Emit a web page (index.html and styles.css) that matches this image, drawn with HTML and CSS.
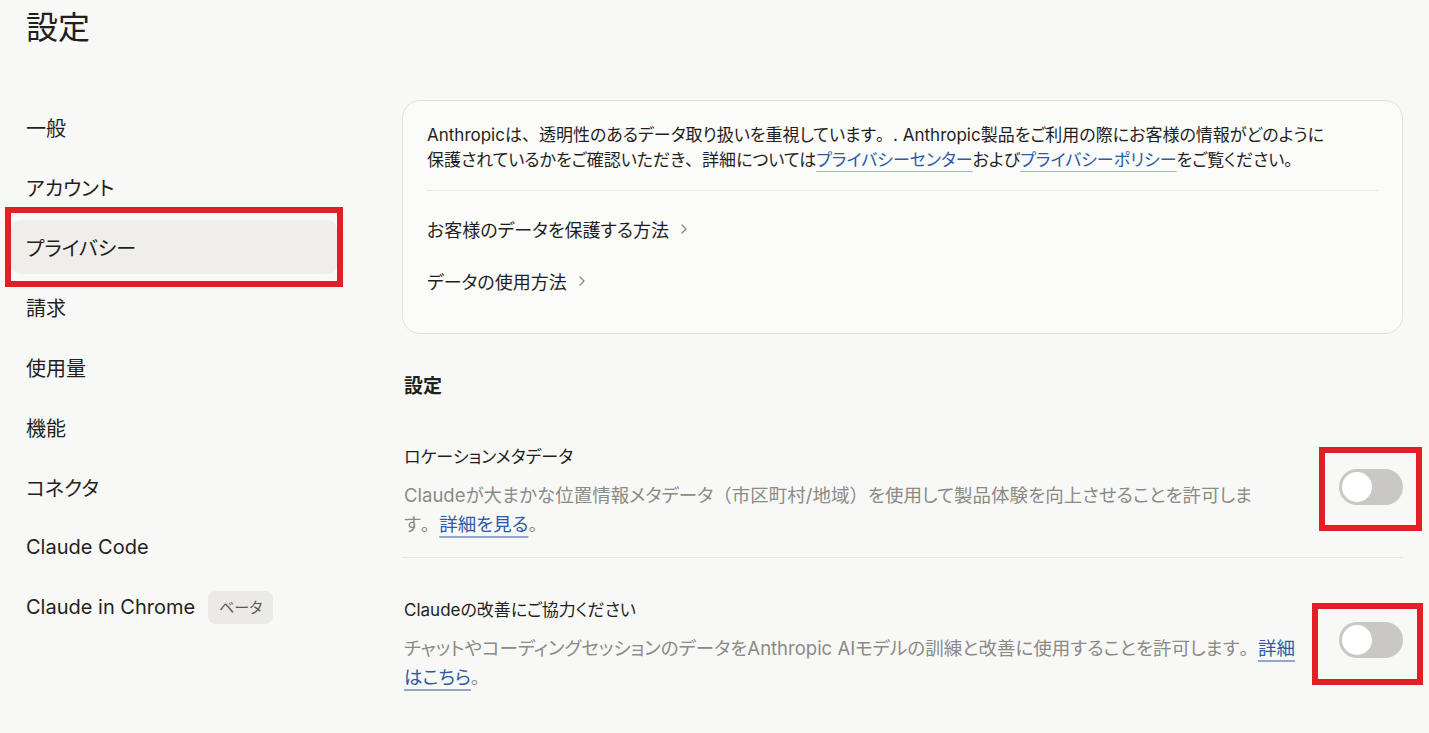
FILE: index.html
```html
<!DOCTYPE html>
<html lang="ja">

<head>
  <meta charset="UTF-8">
  <meta name="viewport" content="width=device-width, initial-scale=1.0">
  <title>設定</title>
  <link rel="stylesheet" href="styles.css">
</head>

<body>
  <h1 class="page-title">設定</h1>

  <div class="layout">
    <nav class="sidebar">
      <a class="nav-item" href="#">一般</a>
      <a class="nav-item" href="#">アカウント</a>
      <a class="nav-item active" href="#">プライバシー</a>
      <a class="nav-item" href="#">請求</a>
      <a class="nav-item" href="#">使用量</a>
      <a class="nav-item" href="#">機能</a>
      <a class="nav-item" href="#">コネクタ</a>
      <a class="nav-item" href="#">Claude Code</a>
      <a class="nav-item" href="#">Claude in Chrome <span class="badge">ベータ</span></a>
    </nav>

    <main class="main">
      <section class="card">
        <p class="intro">Anthropicは<span class="fw">、</span>透明性のあるデータ取り扱いを重視しています<span class="fw">。</span>. Anthropic製品をご利用の際にお客様の情報がどのように<br>保護されているかをご確認いただき<span class="fw">、</span>詳細については<a class="link" href="#">プライバシーセンター</a>および<a class="link" href="#">プライバシーポリシー</a>をご覧ください<span class="fw">。</span></p>
        <div class="card-links">
          <a class="more" href="#">お客様のデータを保護する方法
            <svg width="14" height="14" viewBox="0 0 14 14"><path d="M5 3l4 4-4 4" fill="none" stroke="#8a8985" stroke-width="1.3" stroke-linecap="round" stroke-linejoin="round"/></svg>
          </a>
          <a class="more" href="#">データの使用方法
            <svg width="14" height="14" viewBox="0 0 14 14"><path d="M5 3l4 4-4 4" fill="none" stroke="#8a8985" stroke-width="1.3" stroke-linecap="round" stroke-linejoin="round"/></svg>
          </a>
        </div>
      </section>

      <h2 class="section-title">設定</h2>

      <div class="setting">
        <div class="setting-text">
          <div class="setting-name">ロケーションメタデータ</div>
          <p class="setting-desc">Claudeが大まかな位置情報メタデータ<span class="fw">（</span>市区町村/地域<span class="fw">）</span>を使用して製品体験を向上させることを許可しま<br>す<span class="fw">。</span><a class="link strong" href="#">詳細を見る</a><span class="fw">。</span></p>
        </div>
        <div class="toggle"><span class="knob"></span></div>
      </div>

      <div class="setting last">
        <div class="setting-text">
          <div class="setting-name">Claudeの改善にご協力ください</div>
          <p class="setting-desc">チャットやコーディングセッションのデータをAnthropic AIモデルの訓練と改善に使用することを許可します<span class="fw">。</span><a class="link strong" href="#">詳細<br>はこちら</a><span class="fw">。</span></p>
        </div>
        <div class="toggle"><span class="knob"></span></div>
      </div>
    </main>
  </div>

  <!-- highlight boxes drawn on the screenshot -->
  <div class="mark mark-nav"></div>
  <div class="mark mark-toggle1"></div>
  <div class="mark mark-toggle2"></div>
</body>

</html>
```

FILE: styles.css
```css
body {
  margin: 0;
  padding: 0;
  position: relative;
  min-height: 733px;
  background-color: #f8f8f6;
  color: #1f1f1d;
  font-family: "Inter", "Noto Sans CJK JP", sans-serif;
  font-feature-settings: "palt";
}

a {
  color: inherit;
  text-decoration: none;
}

/* full width punctuation */
.fw {
  font-feature-settings: normal;
}

.page-title {
  margin: 0;
  padding: 8px 0 0 26px;
  height: 100px;
  box-sizing: border-box;
  font-size: 32px;
  font-weight: 400;
  line-height: 40px;
}

.layout {
  display: flex;
  gap: 65px;
  padding-left: 11px;
}

.sidebar {
  width: 326px;
  display: flex;
  flex-direction: column;
  gap: 6px;
}

.nav-item {
  height: 54px;
  display: flex;
  align-items: center;
  padding-left: 15px;
  border-radius: 10px;
  font-size: 20px;
}

.nav-item.active {
  background-color: #efeeea;
}

.badge {
  margin-left: 13px;
  padding: 0 11px;
  height: 33px;
  line-height: 33px;
  border-radius: 8px;
  background-color: #ebeae6;
  color: #5b5a56;
  font-size: 15px;
}

.main {
  width: 1001px;
}

.card {
  background-color: #fbfbfa;
  border: 1px solid #e0dfda;
  border-radius: 18px;
  padding: 22px 24px 26px;
}

.intro {
  margin: 0;
  font-size: 17px;
  line-height: 25px;
  padding-bottom: 17px;
  border-bottom: 1px solid #e8e7e3;
}

.link {
  color: #2c5ca6;
  text-decoration: underline;
  text-decoration-color: #9cb2d4;
  text-underline-offset: 5px;
  text-decoration-thickness: 1px;
}

.link.strong {
  text-decoration-thickness: 2px;
  text-decoration-color: #90a8cc;
}

.card-links {
  padding-top: 12px;
}

.more {
  height: 52px;
  display: flex;
  align-items: center;
  gap: 8px;
  font-size: 18px;
}

.section-title {
  margin: 39px 0 4px 2px;
  font-size: 19px;
  font-weight: 700;
  line-height: 28px;
}

.setting {
  display: flex;
  align-items: flex-start;
  justify-content: space-between;
  padding: 39px 0 18px 2px;
  border-bottom: 1px solid #e8e7e3;
}

.setting.last {
  border-bottom: none;
}

.setting-text {
  width: 910px;
}

.setting-name {
  font-size: 17px;
  line-height: 26px;
}

.setting-desc {
  margin: 11px 0 0;
  font-size: 18.5px;
  line-height: 29px;
  color: #8b8a86;
}

.toggle {
  margin-top: 25px;
  width: 64px;
  height: 36px;
  border-radius: 18px;
  background-color: #c9c8c4;
  position: relative;
  flex-shrink: 0;
}

.knob {
  position: absolute;
  left: 3px;
  top: 3px;
  width: 30px;
  height: 30px;
  border-radius: 50%;
  background-color: #fff;
}

.mark {
  position: absolute;
  border: 6px solid #e31e24;
  box-sizing: border-box;
}

.mark-nav {
  left: 5px;
  top: 207px;
  width: 338px;
  height: 80px;
}

.mark-toggle1 {
  left: 1319px;
  top: 447px;
  width: 103px;
  height: 84px;
}

.mark-toggle2 {
  left: 1312px;
  top: 603px;
  width: 111px;
  height: 82px;
}
```
